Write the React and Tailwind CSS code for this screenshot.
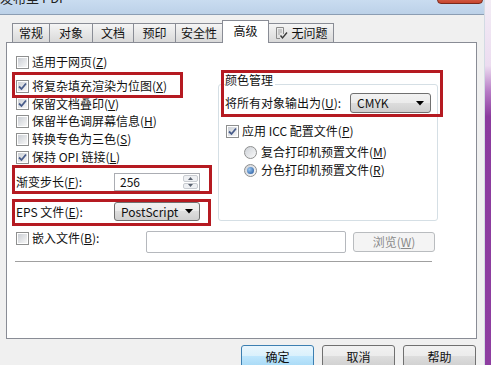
import React from "react";

// accelerator key label, e.g. 适用于网页(Z)
const Acc = ({ text, k, tail = "" }) => (
  <span className="whitespace-nowrap">
    {text}(<span className="underline underline-offset-[1px]">{k}</span>){tail}
  </span>
);

function Check({ checked }) {
  return (
    <span className="flex h-[13px] w-[13px] shrink-0 items-center justify-center border border-[#8e8f8f] bg-white">
      <span className="flex h-[9px] w-[9px] items-center justify-center bg-linear-to-br from-[#cbcfd5] to-[#f7f7f7]">
        {checked && (
          <svg width="9" height="9" viewBox="0 0 9 9">
            <path d="M1 4.5 L3.5 7 L8 1.5" fill="none" stroke="#485c8a" strokeWidth="1.8" />
          </svg>
        )}
      </span>
    </span>
  );
}

function Radio({ checked }) {
  return (
    <span className="flex h-[13px] w-[13px] shrink-0 items-center justify-center rounded-full border border-[#8e8f8f] bg-linear-to-br from-[#cdd1d7] to-[#fafafa]">
      {checked && (
        <span className="h-[7px] w-[7px] rounded-full bg-[radial-gradient(circle_at_35%_35%,#9cc9f2,#1c4f98)]" />
      )}
    </span>
  );
}

function Combo({ value, className }) {
  return (
    <div
      className={`flex items-center justify-between rounded-[3px] border border-[#707070] bg-[linear-gradient(#f2f2f2,#ebebeb_50%,#dddddd_50%,#cfcfcf)] pl-[6px] pr-[6px] ${className}`}
    >
      <span className="leading-[14px]">{value}</span>
      <svg width="8" height="5" viewBox="0 0 8 5">
        <path d="M0 0 H8 L4 4.5 Z" fill="#000" />
      </svg>
    </div>
  );
}

function Tab({ label, w, first, active, icon }) {
  if (active) {
    return (
      <div
        className={`relative z-10 -mb-px -ml-px flex h-[23px] items-start justify-center border border-b-0 border-[#898c95] bg-white pt-[2px] leading-[16px] ${w}`}
      >
        {label}
      </div>
    );
  }
  return (
    <div
      className={`flex h-[19px] items-center justify-center gap-[3px] border border-b-0 border-[#898c95] bg-linear-to-b from-[#f5f5f5] to-[#d9d9d9] leading-[18px] ${first ? "" : "-ml-px"} ${w}`}
    >
      {icon}
      {label}
    </div>
  );
}

const NoIssueIcon = () => (
  <svg width="14" height="14" viewBox="0 0 14 14">
    <path d="M2.5 1.5 H9.5 V8 M2.5 1.5 V12.5 H6" fill="none" stroke="#8a8a8a" />
    <path d="M4 4 H8 M4 6 H8 M4 8 H6" stroke="#a5a5a5" />
    <path d="M6.5 9.5 L8.5 12 L13 6.5" fill="none" stroke="#3a3a3a" strokeWidth="1.4" />
  </svg>
);

function Btn({ children, primary }) {
  return (
    <div
      className={`flex h-[23px] w-[73px] items-center justify-center rounded-[3px] border leading-[14px] ${
        primary
          ? "border-[#3c7fb1] bg-[linear-gradient(#eaf6fd,#d9f0fc_50%,#bee6fd_50%,#a7d9f5)]"
          : "border-[#707070] bg-[linear-gradient(#f2f2f2,#ebebeb_50%,#dddddd_50%,#cfcfcf)]"
      }`}
    >
      {children}
    </div>
  );
}

export default function App() {
  return (
    <div className="flex h-[365px] w-[491px] overflow-hidden bg-[#f0f0f0] font-['Noto_Sans_CJK_SC','Noto_Sans',sans-serif] text-[12px] text-[#111]">
      <div className="flex w-[485px] shrink-0 flex-col border-r border-[#d3dbe4]">
        {/* title bar, mostly scrolled off */}
        <div className="flex h-[15px] shrink-0 justify-between overflow-hidden border-b border-[#8b9db3] bg-linear-to-b from-[#c9dcf0] to-[#bcd1e8]">
          <span className="-mt-[9px] leading-[14px] text-[13px] text-[#222]">发布至 PDF</span>
          <span className="mr-[1px] -mt-[14px] h-[18px] w-[46px] rounded-b-[4px] border border-[#7a2a1c] bg-linear-to-b from-[#e59a86] to-[#c8452d]" />
        </div>

        {/* tabs */}
        <div className="mt-[5px] flex items-end pl-[12px]">
          <Tab label="常规" w="w-[38px]" first />
          <Tab label="对象" w="w-[44px]" />
          <Tab label="文档" w="w-[42px]" />
          <Tab label="预印" w="w-[43px]" />
          <Tab label="安全性" w="w-[48px]" />
          <Tab label="高级" w="w-[47px]" active />
          <Tab label="无问题" w="w-[66px]" icon={<NoIssueIcon />} />
        </div>

        {/* panel */}
        <div className="relative ml-[6px] flex h-[297px] w-[471px] shrink-0 flex-col border border-[#898c95] bg-white">
          <div className="flex">
            <div className="flex w-[211px] flex-col pl-[9px] pt-[10px]">
              <div className="flex h-[18px] items-center gap-[3px]">
                <Check />
                <Acc text="适用于网页" k="Z" />
              </div>
              <div className="mt-[6px] flex h-[18px] items-center gap-[3px]">
                <Check checked />
                <Acc text="将复杂填充渲染为位图" k="X" />
              </div>
              <div className="flex h-[17px] items-center gap-[3px]">
                <Check checked />
                <Acc text="保留文档叠印" k="V" />
              </div>
              <div className="flex h-[18px] items-center gap-[3px]">
                <Check />
                <Acc text="保留半色调屏幕信息" k="H" />
              </div>
              <div className="flex h-[18px] items-center gap-[3px]">
                <Check />
                <Acc text="转换专色为三色" k="S" />
              </div>
              <div className="flex h-[18px] items-center gap-[3px]">
                <Check checked />
                <Acc text="保持 OPI 链接" k="L" />
              </div>

              <div className="mt-[7px] flex h-[18px] items-center">
                <span className="w-[98px]">
                  <Acc text="渐变步长" k="F" tail=":" />
                </span>
                <div className="flex h-[18px] w-[86px] border border-[#abadb3] bg-white">
                  <span className="flex-1 pl-[5px] leading-[16px]">256</span>
                  <div className="flex w-[17px] flex-col gap-px p-px">
                    <span className="flex flex-1 items-center justify-center rounded-[2px] border border-[#c9ccd1] bg-[#eef0f3]">
                      <svg width="5" height="3" viewBox="0 0 5 3">
                        <path d="M0 3 L2.5 0 L5 3 Z" fill="#5a6270" />
                      </svg>
                    </span>
                    <span className="flex flex-1 items-center justify-center rounded-[2px] border border-[#c9ccd1] bg-[#eef0f3]">
                      <svg width="5" height="3" viewBox="0 0 5 3">
                        <path d="M0 0 L2.5 3 L5 0 Z" fill="#5a6270" />
                      </svg>
                    </span>
                  </div>
                </div>
              </div>

              <div className="mt-[11px] flex h-[19px] items-center">
                <span className="w-[98px]">
                  <Acc text="EPS 文件" k="E" tail=":" />
                </span>
                <Combo value="PostScript" className="h-[19px] w-[86px]" />
              </div>
            </div>

            {/* colour management group */}
            <div className="mt-[41px] flex w-[220px] flex-col rounded-[3px] border border-[#d5dfe5] px-[6px] pb-[3px]">
              <span className="-mt-[12px] w-fit bg-white pr-[2px] leading-[14px]">颜色管理</span>
              <div className="mt-[6px] flex h-[20px] items-center justify-between">
                <Acc text="将所有对象输出为" k="U" tail=":" />
                <Combo value="CMYK" className="h-[20px] w-[81px]" />
              </div>
              <div className="mt-[9px] flex h-[18px] items-center gap-[3px] pl-px">
                <Check checked />
                <Acc text="应用 ICC 配置文件" k="P" />
              </div>
              <div className="mt-[3px] flex h-[18px] items-center gap-[4px] pl-[19px]">
                <Radio />
                <Acc text="复合打印机预置文件" k="M" />
              </div>
              <div className="flex h-[18px] items-center gap-[4px] pl-[19px]">
                <Radio checked />
                <Acc text="分色打印机预置文件" k="R" />
              </div>
            </div>
          </div>

          {/* embed file */}
          <div className="mt-[10px] flex items-start pl-[9px]">
            <div className="flex h-[14px] w-[130px] items-center gap-[3px]">
              <Check />
              <span className="leading-[14px]">
                <Acc text="嵌入文件" k="B" tail=":" />
              </span>
            </div>
            <div className="h-[22px] w-[200px] rounded-[2px] border border-[#b5b8bd] bg-white" />
            <div className="ml-[7px] mt-px flex h-[20px] w-[82px] items-center justify-center rounded-[3px] border border-[#b9bcbf] bg-[#f4f4f4] text-[#8a8a8a]">
              <Acc text="浏览" k="W" />
            </div>
          </div>
          <div className="ml-[8px] mt-[8px] h-px w-[417px] bg-[#a0a0a0]" />

          {/* annotation boxes */}
          <div className="pointer-events-none absolute left-[5px] top-[29px] h-[26px] w-[171px] border-[3px] border-[#b51a21]" />
          <div className="pointer-events-none absolute left-[5px] top-[122px] h-[29px] w-[200px] border-[3px] border-[#b51a21]" />
          <div className="pointer-events-none absolute left-[5px] top-[156px] h-[27px] w-[199px] border-[3px] border-[#b51a21]" />
          <div className="pointer-events-none absolute left-[214px] top-[27px] h-[47px] w-[222px] border-[3px] border-[#b51a21]" />
        </div>

        {/* buttons */}
        <div className="mt-[6px] flex justify-end gap-[8px] pr-[8px]">
          <Btn primary>确定</Btn>
          <Btn>取消</Btn>
          <Btn>帮助</Btn>
        </div>
      </div>
      <div className="w-[6px] shrink-0 bg-[linear-gradient(#f2ecf5_0%,#ecdcf0_18%,#b77cc6_25%,#8b3a9e_32%,#8e3ea1_100%)]" />
    </div>
  );
}
